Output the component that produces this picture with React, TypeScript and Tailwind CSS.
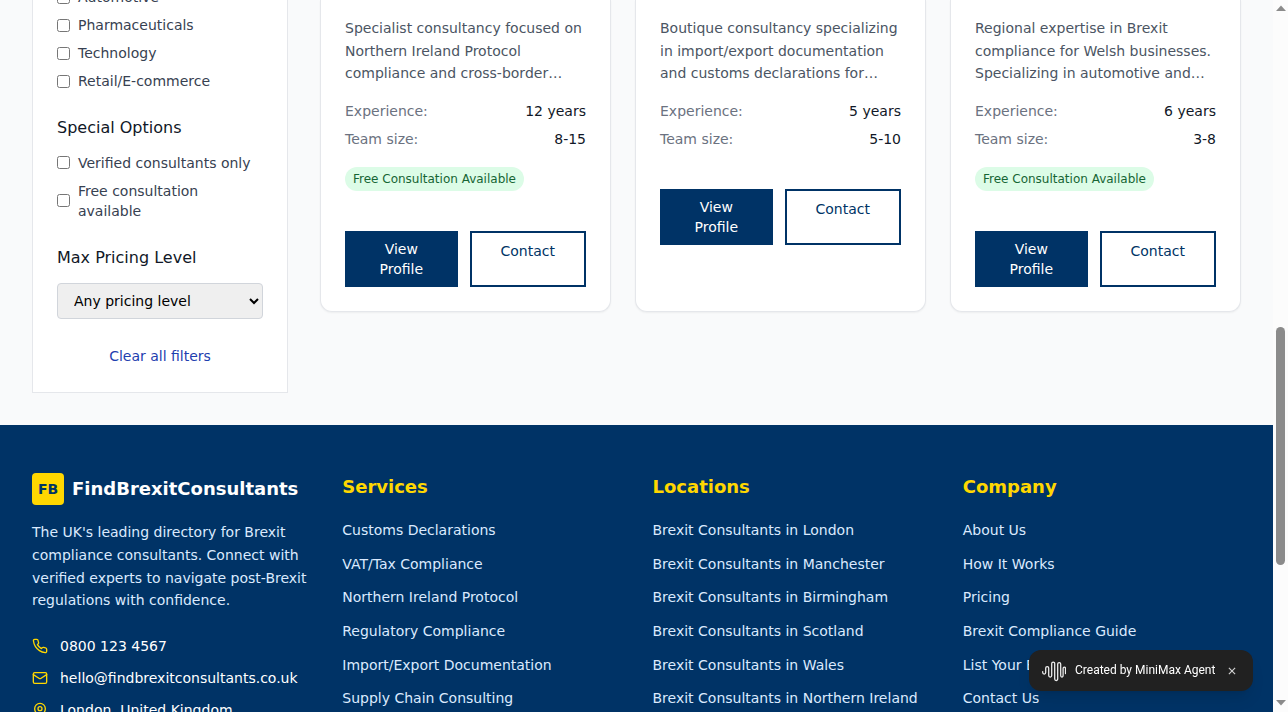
const consultants = [
  {
    lines: ["Specialist consultancy focused on", "Northern Ireland Protocol", "compliance and cross-border…"],
    experience: "12 years",
    team: "8-15",
    free: true,
  },
  {
    lines: ["Boutique consultancy specializing", "in import/export documentation", "and customs declarations for…"],
    experience: "5 years",
    team: "5-10",
    free: false,
  },
  {
    lines: ["Regional expertise in Brexit", "compliance for Welsh businesses.", "Specializing in automotive and…"],
    experience: "6 years",
    team: "3-8",
    free: true,
  },
];

const footerColumns = [
  {
    title: "Services",
    links: [
      "Customs Declarations",
      "VAT/Tax Compliance",
      "Northern Ireland Protocol",
      "Regulatory Compliance",
      "Import/Export Documentation",
      "Supply Chain Consulting",
    ],
  },
  {
    title: "Locations",
    links: [
      "Brexit Consultants in London",
      "Brexit Consultants in Manchester",
      "Brexit Consultants in Birmingham",
      "Brexit Consultants in Scotland",
      "Brexit Consultants in Wales",
      "Brexit Consultants in Northern Ireland",
    ],
  },
  {
    title: "Company",
    links: ["About Us", "How It Works", "Pricing", "Brexit Compliance Guide", "List Your Business", "Contact Us"],
  },
];

function Option({ label }: { label: string }) {
  return (
    <label className="flex items-center gap-2 text-sm text-[#374151]">
      <input type="checkbox" className="shrink-0" />
      <span>{label}</span>
    </label>
  );
}

function Filters() {
  return (
    <aside className="h-[393px] w-64 shrink-0 overflow-hidden border-x border-b border-[#e5e7eb] bg-white px-6">
      <div className="-mt-[13px] flex flex-col gap-2">
        <Option label="Automotive" />
        <Option label="Pharmaceuticals" />
        <Option label="Technology" />
        <Option label="Retail/E-commerce" />
      </div>
      <h4 className="mt-6 mb-3 leading-[25.6px] text-[#111827]">Special Options</h4>
      <div className="flex flex-col gap-2">
        <Option label="Verified consultants only" />
        <Option label="Free consultation available" />
      </div>
      <h4 className="mt-6 mb-[12.8px] leading-[25.6px] text-[#111827]">Max Pricing Level</h4>
      <select className="block h-9 w-full rounded border border-[#d1d5db] bg-[#efefef] px-3 text-sm text-black">
        <option>Any pricing level</option>
      </select>
      <button className="mt-[27px] block w-full text-center text-sm text-[#1e40af]">Clear all filters</button>
    </aside>
  );
}

function Card({ item }: { item: (typeof consultants)[number] }) {
  return (
    <article className="h-[312px] rounded-b-xl border-x border-b border-[#e5e7eb] bg-white px-6 pt-[16.8px] text-sm shadow-[0_1px_2px_0_rgb(0_0_0/0.05)]">
      <p className="leading-[22.75px] whitespace-nowrap text-[#4b5563]">
        {item.lines.map((line) => (
          <span key={line} className="block">
            {line}
          </span>
        ))}
      </p>
      <dl className="mt-[16.2px] flex flex-col gap-2">
        <div className="flex justify-between">
          <dt className="text-[#6b7280]">Experience:</dt>
          <dd className="text-[#111827]">{item.experience}</dd>
        </div>
        <div className="flex justify-between">
          <dt className="text-[#6b7280]">Team size:</dt>
          <dd className="text-[#111827]">{item.team}</dd>
        </div>
      </dl>
      {item.free && (
        <div className="mt-[18px] flex">
          <span className="rounded-full bg-[#dcfce7] px-2 py-1 text-xs text-[#166534]">Free Consultation Available</span>
        </div>
      )}
      <div className="mt-10 flex gap-3">
        <a className="w-[112.5px] shrink-0 bg-[#003366] px-6 py-2 text-center text-white">View Profile</a>
        <a className="flex-1 border-2 border-[#003366] px-6 py-2 text-center text-[#003366]">Contact</a>
      </div>
    </article>
  );
}

const contactIcon = "size-4 fill-none stroke-[#ffd700] stroke-2";

function Footer() {
  return (
    <footer className="grid h-[287px] shrink-0 grid-cols-4 gap-8 overflow-hidden bg-[#003366] px-8 pt-12">
      <div>
        <div className="flex items-center gap-2">
          <span className="flex size-8 items-center justify-center rounded bg-[#ffd700] text-sm font-bold text-[#003366]">
            FB
          </span>
          <span className="text-lg font-bold text-white">FindBrexitConsultants</span>
        </div>
        <p className="mt-4 text-sm leading-[22.75px] text-[#dbeafe]">
          The UK's leading directory for Brexit compliance consultants. Connect with verified experts to navigate
          post-Brexit regulations with confidence.
        </p>
        <ul className="mt-6 flex flex-col gap-3 text-sm text-white">
          <li className="flex items-center gap-3">
            <svg viewBox="0 0 24 24" strokeLinecap="round" strokeLinejoin="round" className={contactIcon}>
              <path d="M22 16.92v3a2 2 0 0 1-2.18 2 19.79 19.79 0 0 1-8.63-3.07 19.5 19.5 0 0 1-6-6 19.79 19.79 0 0 1-3.07-8.67A2 2 0 0 1 4.11 2h3a2 2 0 0 1 2 1.72 12.84 12.84 0 0 0 .7 2.81 2 2 0 0 1-.45 2.11L8.09 9.91a16 16 0 0 0 6 6l1.27-1.27a2 2 0 0 1 2.11-.45 12.84 12.84 0 0 0 2.81.7A2 2 0 0 1 22 16.92z" />
            </svg>
            0800 123 4567
          </li>
          <li className="flex items-center gap-3">
            <svg viewBox="0 0 24 24" strokeLinecap="round" strokeLinejoin="round" className={contactIcon}>
              <rect width="20" height="16" x="2" y="4" rx="2" />
              <path d="m22 7-8.97 5.7a1.94 1.94 0 0 1-2.06 0L2 7" />
            </svg>
            hello@findbrexitconsultants.co.uk
          </li>
          <li className="flex items-center gap-3">
            <svg viewBox="0 0 24 24" strokeLinecap="round" strokeLinejoin="round" className={contactIcon}>
              <path d="M20 10c0 6-8 12-8 12s-8-6-8-12a8 8 0 0 1 16 0Z" />
              <circle cx="12" cy="10" r="3" />
            </svg>
            London, United Kingdom
          </li>
        </ul>
      </div>
      {footerColumns.map((column) => (
        <div key={column.title}>
          <h3 className="mb-[16.2px] text-lg font-bold text-[#ffd700]">{column.title}</h3>
          <ul className="flex flex-col gap-2 leading-[25.6px] whitespace-nowrap">
            {column.links.map((link) => (
              <li key={link}>
                <a className="text-sm leading-[20px] text-[#dbeafe]">{link}</a>
              </li>
            ))}
          </ul>
        </div>
      ))}
    </footer>
  );
}

function Scrollbar() {
  return (
    <div className="flex w-[15px] shrink-0 flex-col items-center bg-[#fcfcfc]">
      <svg className="mt-[5px] h-[6px] w-[10px]" viewBox="0 0 10 6" fill="#8b8b8b">
        <path d="M5 0.5L10 6H0Z" />
      </svg>
      <div className="mt-[316px] h-[238px] w-[9px] rounded-full bg-[#8b8b8b]" />
      <svg className="mt-[135px] h-[6px] w-[10px]" viewBox="0 0 10 6" fill="#8b8b8b">
        <path d="M5 5.5L10 0H0Z" />
      </svg>
    </div>
  );
}

function AgentBadge() {
  return (
    <div className="fixed top-[650px] left-[1029px] flex h-[41px] w-[224px] items-center rounded-xl bg-[#212121] pl-[13px] font-[Roboto,sans-serif] text-xs text-white shadow-lg">
      <svg className="h-[22px] w-6" viewBox="0 0 24 22" fill="none" stroke="#f0f0f0" strokeWidth="1.25" strokeLinecap="round">
        <path d="M0.7 11.5v1a1.5 1.5 0 0 0 3 0V8a1.5 1.5 0 0 1 3 0v7.500a1.500 1.500 0 0 0 3 0V3.500a1.500 1.500 0 0 1 3 0v15.500a1.500 1.500 0 0 0 3 0V4a1.500 1.500 0 0 1 3 0v11.500a1.200 1.500 0 0 0 2.400 0V8.500a1.200 1.500 0 0 1 2.400 0v5" />
      </svg>
      <span className="mb-px ml-[9px] w-[140px] whitespace-nowrap">Created by MiniMax Agent</span>
      <svg className="ml-[13px] size-2" viewBox="0 0 9 9" stroke="#d0d0d0" strokeWidth="1.3">
        <path d="M1 1l7 7M8 1l-7 7" />
      </svg>
    </div>
  );
}

export default function App() {
  return (
    <div className="flex h-[712px] w-[1288px] overflow-hidden font-['DejaVu_Sans',sans-serif]">
      <div className="flex w-[1273px] flex-col bg-[#f9fafb]">
        <main className="flex h-[425px] shrink-0 gap-8 px-8">
          <Filters />
          <section className="grid flex-1 grid-cols-3 items-start gap-6">
            {consultants.map((item) => (
              <Card key={item.lines[0]} item={item} />
            ))}
          </section>
        </main>
        <Footer />
      </div>
      <Scrollbar />
      <AgentBadge />
    </div>
  );
}
